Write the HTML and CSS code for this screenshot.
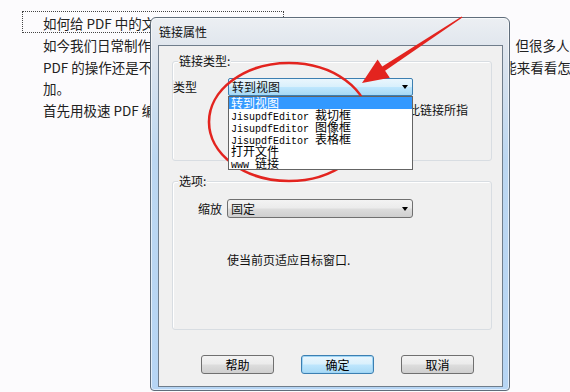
FILE: index.html
```html
<!DOCTYPE html>
<html lang="zh-CN">
<head>
<meta charset="utf-8">
<title>链接属性</title>
<link rel="stylesheet" href="styles.css">
</head>
<body>
<div class="doc">
  <div class="line sel">如何给 PDF 中的文字添加链接</div>
  <div class="line l2">如今我们日常制作文档时，经常需要在文件中插入一些链接来方便阅读和跳转，但很多人对于在文件中添加链接</div>
  <div class="line">PDF 的操作还是不太熟悉，不知道具体应该怎样去做，下面小编希望大家都&#8194;&#8194;能来看看怎么操作吧</div>
  <div class="line">加。</div>
  <div class="line">首先用极速 PDF 编辑器打开需要添加链接的文档</div>
</div>

<div class="window">
  <div class="titlebar">链接属性</div>
  <div class="client">
    <div class="group g1">
      <div class="legend">链接类型:</div>
      <div class="row">
        <span class="lbl lbl-type">类型</span>
        <div class="combo-wrap">
          <div class="combo active"><span class="val">转到视图</span><i class="arrow"></i></div>
          <ul class="list">
            <li class="sel-item">转到视图</li>
            <li><span class="mono">JisupdfEditor </span>裁切框</li>
            <li><span class="mono">JisupdfEditor </span>图像框</li>
            <li><span class="mono">JisupdfEditor </span>表格框</li>
            <li>打开文件</li>
            <li><span class="mono">www </span>链接</li>
          </ul>
        </div>
      </div>
      <p class="desc d1">单击链接时使当前页面视图跳转到此链接所指</p>
    </div>

    <div class="group g2">
      <div class="legend">选项:</div>
      <div class="row row2">
        <span class="lbl lbl-zoom">缩放</span>
        <div class="combo"><span class="val">固定</span><i class="arrow"></i></div>
      </div>
      <p class="desc d2">使当前页适应目标窗口.</p>
    </div>

    <div class="buttons">
      <button class="btn">帮助</button>
      <button class="btn default">确定</button>
      <button class="btn">取消</button>
    </div>
  </div>
</div>

<svg class="annot" width="570" height="392" viewBox="0 0 570 392" xmlns="http://www.w3.org/2000/svg">
  <ellipse cx="289" cy="122" rx="80" ry="59" fill="none" stroke="#e3241f" stroke-width="2.6"/>
  <polygon points="362,83 389.8,77.8 385.1,70.7 462.4,17.6 461.6,16.4 382.3,66.5 377.6,59.4" fill="#e3241f"/>
</svg>
</body>
</html>
```

FILE: styles.css
```css
* { box-sizing: border-box; }

html, body {
  margin: 0;
  padding: 0;
}

body {
  width: 570px;
  height: 392px;
  overflow: hidden;
  position: relative;
  background: #fcfbfd;
  font-family: "Noto Sans CJK SC", "Noto Sans", sans-serif;
  color: #222;
}

/* document text */
.doc {
  padding: 11px 0 0 22px;
  font-size: 13.5px;
}

.line {
  white-space: nowrap;
  line-height: 21.7px;
  padding-left: 21px;
}

.sel {
  width: 262px;
  height: 22px;
  line-height: 22px;
  border: 1px dotted #444;
  padding-left: 20px;
  overflow: visible;
  margin-bottom: 2px;
}

/* window */
.window {
  position: absolute;
  left: 150px;
  top: 17px;
  width: 360px;
  height: 374px;
  border: 1px solid #5f6d7b;
  border-radius: 6px 6px 4px 4px;
  background: linear-gradient(180deg, #eceff3 0%, #e1e7ee 7%, #d3e0ee 18%, #bcd7f1 38%, #b6d5f4 100%);
  padding: 0 6px 3px 7px;
  display: flex;
  flex-direction: column;
  box-shadow: 0 0 0 1px rgba(255,255,255,0.6) inset;
}

.titlebar {
  height: 27px;
  line-height: 27px;
  font-size: 12px;
  color: #111;
  padding-left: 1px;
}

.client {
  flex: 1;
  background: #f0f0f0;
  border: 1px solid #6f7d8b;
  padding: 15px 10px 0 13px;
  font-size: 12px;
  color: #111;
}

/* group boxes */
.group {
  position: relative;
  width: 320px;
  border: 1px solid #d8dde2;
  border-radius: 3px;
  box-shadow: 1px 1px 0 #fff inset;
}

.g1 { height: 100px; }
.g2 { height: 149px; margin-top: 20px; }

.legend {
  display: block;
  width: max-content;
  margin: -8px 0 0 5px;
  padding: 0 1px;
  height: 14px;
  line-height: 14px;
  background: #f0f0f0;
}

.row {
  display: flex;
  align-items: center;
  height: 19px;
  margin-top: 9px;
}

.lbl {
  line-height: 14px;
  background: #f0f0f0;
}

.lbl-type {
  width: 55px;
  padding-left: 0;
}

.row2 {
  margin-top: 11px;
  padding-left: 25px;
}

.lbl-zoom { width: 29px; }

.combo-wrap {
  position: relative;
}

.combo {
  position: relative;
  width: 186px;
  height: 19px;
  display: flex;
  align-items: center;
  padding-left: 3px;
  border: 1px solid #707070;
  border-radius: 3px;
  background: linear-gradient(180deg, #f3f3f3 0%, #ebebeb 48%, #dddddd 52%, #cfcfcf 100%);
  line-height: 14px;
}

.combo.active {
  width: 185px;
  height: 18px;
  border-color: #3c7fb1;
  border-radius: 2px;
  background: linear-gradient(180deg, #eaf6fd 0%, #d9f0fc 48%, #bee6fd 52%, #a7d9f5 100%);
}

.arrow {
  margin-left: auto;
  margin-right: 4px;
  width: 0;
  height: 0;
  border-left: 3.5px solid transparent;
  border-right: 3.5px solid transparent;
  border-top: 4px solid #000;
}

.list {
  position: absolute;
  left: 0;
  top: 100%;
  width: 185px;
  height: 74px;
  margin: 0;
  padding: 0;
  list-style: none;
  background: #fff;
  border: 1px solid #646464;
  z-index: 2;
}

.list li {
  height: 12px;
  line-height: 12px;
  padding-left: 2px;
  font-size: 12px;
  white-space: nowrap;
  color: #000;
  overflow: visible;
}

.list .sel-item {
  background: #3399ff;
  color: #fff;
}

.mono {
  font-family: "Liberation Mono", "DejaVu Sans Mono", monospace;
  font-size: 10px;
  white-space: pre;
}

.desc {
  margin: 0;
  line-height: 14px;
  white-space: nowrap;
}

.d1 {
  margin: 7px 0 0 55px;
}

.d2 {
  margin: 35px 0 0 54px;
}

/* buttons */
.buttons {
  display: flex;
  gap: 27px;
  margin: 25px 0 0 29px;
}

.btn {
  width: 73px;
  height: 19px;
  padding: 0;
  font-family: "Noto Sans CJK SC", sans-serif;
  font-size: 12px;
  line-height: 14px;
  color: #000;
  border: 1px solid #707070;
  border-radius: 3px;
  background: linear-gradient(180deg, #f3f3f3 0%, #ebebeb 48%, #dddddd 52%, #cfcfcf 100%);
}

.btn.default {
  border-color: #3c7fb1;
  background: linear-gradient(180deg, #eaf6fd 0%, #d9f0fc 48%, #bee6fd 52%, #a7d9f5 100%);
  box-shadow: 0 0 0 1px #9fd5f5 inset;
}

/* annotation overlay */
.annot {
  position: absolute;
  left: 0;
  top: 0;
  pointer-events: none;
}
```
